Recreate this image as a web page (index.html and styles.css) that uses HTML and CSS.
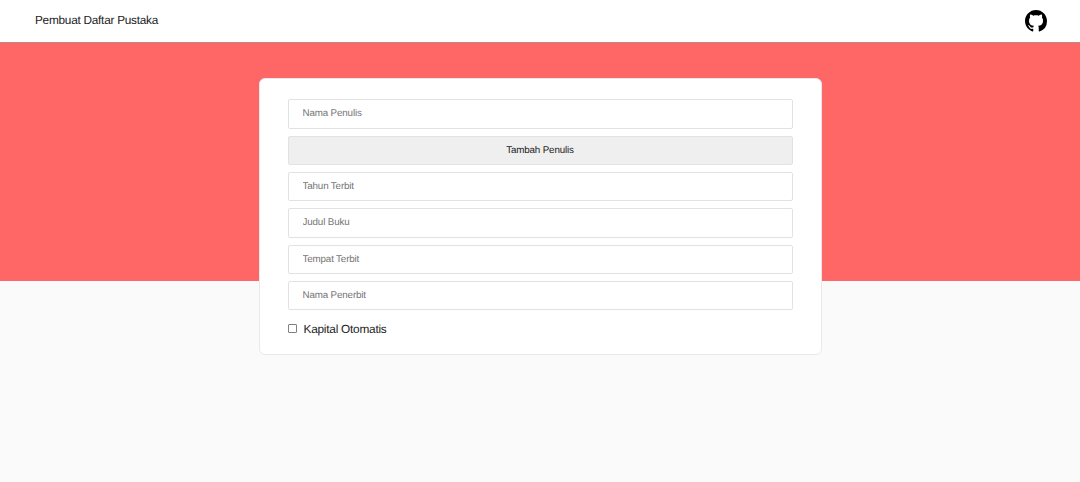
FILE: index.html
```html
<!DOCTYPE html>
<html lang="id">
<head>
<meta charset="utf-8">
<title>Pembuat Daftar Pustaka</title>
<link rel="stylesheet" href="styles.css">
</head>
<body>
<header class="navbar">
  <span class="brand">Pembuat Daftar Pustaka</span>
  <a class="gh" href="#" aria-label="GitHub">
    <svg class="gh-icon" viewBox="0 0 16 16" aria-hidden="true"><path fill="#000" d="M8 0C3.58 0 0 3.58 0 8c0 3.54 2.29 6.53 5.47 7.59.4.07.55-.17.55-.38 0-.19-.01-.82-.01-1.49-2.01.37-2.53-.49-2.69-.94-.09-.23-.48-.94-.82-1.13-.28-.15-.68-.52-.01-.53.63-.01 1.08.58 1.23.82.72 1.21 1.87.87 2.33.66.07-.52.28-.87.51-1.07-1.78-.2-3.64-.89-3.64-3.95 0-.87.31-1.59.82-2.15-.08-.2-.36-1.02.08-2.12 0 0 .67-.21 2.2.82.64-.18 1.32-.27 2-.27s1.36.09 2 .27c1.53-1.04 2.2-.82 2.2-.82.44 1.1.16 1.92.08 2.12.51.56.82 1.27.82 2.15 0 3.07-1.87 3.75-3.65 3.95.29.25.54.73.54 1.48 0 1.07-.01 1.93-.01 2.2 0 .21.15.46.55.38A8.01 8.01 0 0 0 16 8c0-4.42-3.58-8-8-8z"/></svg>
  </a>
</header>
<main class="page">
  <form class="card">
    <input class="field" type="text" placeholder="Nama Penulis">
    <button class="add" type="button">Tambah Penulis</button>
    <input class="field" type="text" placeholder="Tahun Terbit">
    <input class="field" type="text" placeholder="Judul Buku">
    <input class="field" type="text" placeholder="Tempat Terbit">
    <input class="field" type="text" placeholder="Nama Penerbit">
    <label class="check"><input class="box" type="checkbox"><span>Kapital Otomatis</span></label>
  </form>
</main>
</body>
</html>
```
FILE: styles.css
```css
* { box-sizing: border-box; }
html, body { margin: 0; height: 100%; }
body {
  font-family: "Liberation Sans", Arial, sans-serif;
  color: #222;
  background: #fafafa;
  display: flex;
  flex-direction: column;
  overflow: hidden;
  text-rendering: geometricPrecision;
}
.navbar {
  height: 43px;
  flex: none;
  background: #fff;
  border-bottom: 1px solid #b58a8a;
  display: flex;
  align-items: center;
  justify-content: space-between;
  padding: 0 33px 2px 35px;
}
.brand { font-size: 11.8px; letter-spacing: -0.25px; color: #222; }
.gh { display: flex; margin-top: 2px; }
.gh-icon { width: 22px; height: 22px; display: block; }
.page {
  flex: 1;
  background: linear-gradient(to bottom, #ff6666 0, #ff6666 238px, #fafafa 238px);
  display: flex;
  justify-content: center;
  align-items: flex-start;
  padding-top: 35px;
}
.card {
  width: 563px;
  height: 277px;
  background: #fff;
  border: 1px solid #e9e9e9;
  border-radius: 6px;
  padding: 20.33px 28px 0;
  display: flex;
  flex-direction: column;
  gap: 7px;
}
.field, .add {
  width: 100%;
  height: 29.33px;
  flex: none;
  border: 1px solid #e2e2e2;
  border-radius: 2px;
  font-family: inherit;
  font-size: 9.8px;
  letter-spacing: -0.15px;
  text-rendering: geometricPrecision;
}
.field {
  background: #fff;
  padding: 0 14px;
  color: #222;
  outline: none;
}
.field::placeholder { color: #757575; opacity: 1; }
.add {
  background: #efefef;
  color: #222;
  text-align: center;
  padding: 0;
}
.check {
  display: flex;
  align-items: center;
  gap: 7px;
  font-size: 11.8px;
  letter-spacing: -0.22px;
  color: #222;
  height: 24px;
}
.box {
  appearance: none;
  width: 9px;
  height: 9px;
  margin: 0 0 1px;
  flex: none;
  background: #fff;
  border: 1px solid #808080;
  border-radius: 1px;
}
```
